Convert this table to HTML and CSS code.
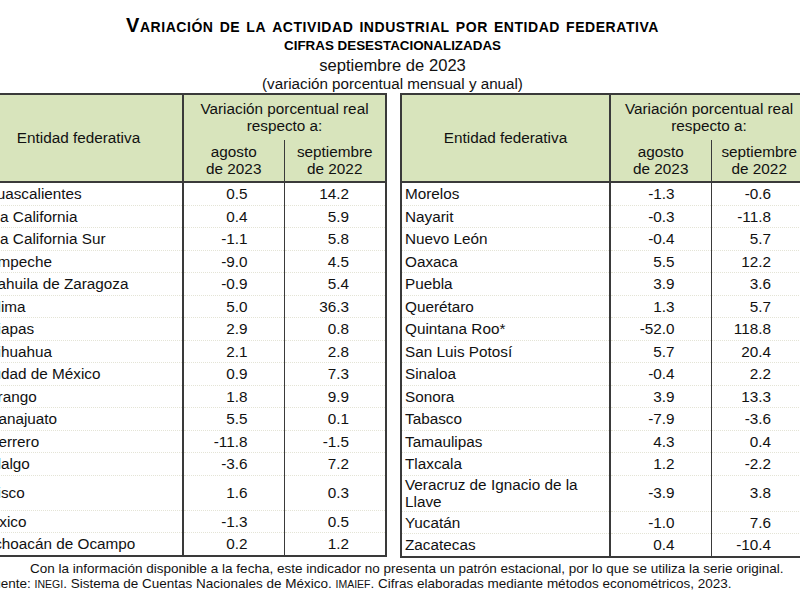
FILE: index.html
```html
<!DOCTYPE html>
<html lang="es">
<head>
<meta charset="utf-8">
<title>Variación de la actividad industrial por entidad federativa</title>
<link rel="stylesheet" href="styles.css">
</head>
<body>
<div class="page">
  <header class="heading">
    <h1 class="title">Variación de la actividad industrial por entidad federativa</h1>
    <div class="sub">CIFRAS DESESTACIONALIZADAS</div>
    <div class="date">septiembre de 2023</div>
    <div class="paren">(variación porcentual mensual y anual)</div>
  </header>
  <div class="tables">
    <table class="data">
      <colgroup><col class="c-name"><col class="c-val"><col class="c-val2"></colgroup>
      <thead>
        <tr class="h1"><th rowspan="2" class="th-name">Entidad federativa</th><th colspan="2" class="th-group">Variación porcentual real<br>respecto a:</th></tr>
        <tr class="h2"><th class="th-a">agosto<br>de 2023</th><th class="th-b">septiembre<br>de 2022</th></tr>
      </thead>
      <tbody>
        <tr><td>Aguascalientes</td><td>0.5</td><td>14.2</td></tr>
        <tr><td>Baja California</td><td>0.4</td><td>5.9</td></tr>
        <tr><td>Baja California Sur</td><td>-1.1</td><td>5.8</td></tr>
        <tr><td>Campeche</td><td>-9.0</td><td>4.5</td></tr>
        <tr><td>Coahuila de Zaragoza</td><td>-0.9</td><td>5.4</td></tr>
        <tr><td>Colima</td><td>5.0</td><td>36.3</td></tr>
        <tr><td>Chiapas</td><td>2.9</td><td>0.8</td></tr>
        <tr><td>Chihuahua</td><td>2.1</td><td>2.8</td></tr>
        <tr><td>Ciudad de México</td><td>0.9</td><td>7.3</td></tr>
        <tr><td>Durango</td><td>1.8</td><td>9.9</td></tr>
        <tr><td>Guanajuato</td><td>5.5</td><td>0.1</td></tr>
        <tr><td>Guerrero</td><td>-11.8</td><td>-1.5</td></tr>
        <tr><td>Hidalgo</td><td>-3.6</td><td>7.2</td></tr>
        <tr class="tall"><td>Jalisco</td><td>1.6</td><td>0.3</td></tr>
        <tr><td>México</td><td>-1.3</td><td>0.5</td></tr>
        <tr><td>Michoacán de Ocampo</td><td>0.2</td><td>1.2</td></tr>
      </tbody>
    </table>
    <table class="data data-right">
      <colgroup><col class="c-name"><col class="c-val"><col class="c-val2"></colgroup>
      <thead>
        <tr class="h1"><th rowspan="2" class="th-name">Entidad federativa</th><th colspan="2" class="th-group">Variación porcentual real<br>respecto a:</th></tr>
        <tr class="h2"><th class="th-a">agosto<br>de 2023</th><th class="th-b">septiembre<br>de 2022</th></tr>
      </thead>
      <tbody>
        <tr><td>Morelos</td><td>-1.3</td><td>-0.6</td></tr>
        <tr><td>Nayarit</td><td>-0.3</td><td>-11.8</td></tr>
        <tr><td>Nuevo León</td><td>-0.4</td><td>5.7</td></tr>
        <tr><td>Oaxaca</td><td>5.5</td><td>12.2</td></tr>
        <tr><td>Puebla</td><td>3.9</td><td>3.6</td></tr>
        <tr><td>Querétaro</td><td>1.3</td><td>5.7</td></tr>
        <tr><td>Quintana Roo*</td><td>-52.0</td><td>118.8</td></tr>
        <tr><td>San Luis Potosí</td><td>5.7</td><td>20.4</td></tr>
        <tr><td>Sinaloa</td><td>-0.4</td><td>2.2</td></tr>
        <tr><td>Sonora</td><td>3.9</td><td>13.3</td></tr>
        <tr><td>Tabasco</td><td>-7.9</td><td>-3.6</td></tr>
        <tr><td>Tamaulipas</td><td>4.3</td><td>0.4</td></tr>
        <tr><td>Tlaxcala</td><td>1.2</td><td>-2.2</td></tr>
        <tr class="tall"><td>Veracruz de Ignacio de la Llave</td><td>-3.9</td><td>3.8</td></tr>
        <tr><td>Yucatán</td><td>-1.0</td><td>7.6</td></tr>
        <tr><td>Zacatecas</td><td>0.4</td><td>-10.4</td></tr>
      </tbody>
    </table>
  </div>
  <footer class="notes">
    <p class="note1">Con la información disponible a la fecha, este indicador no presenta un patrón estacional, por lo que se utiliza la serie original.</p>
    <p class="note2">Fuente: <span class="sc">INEGI</span>. Sistema de Cuentas Nacionales de México. <span class="sc">IMAIEF</span>. Cifras elaboradas mediante métodos econométricos, 2023.</p>
  </footer>
</div>
</body>
</html>
```

FILE: styles.css
```css
html, body {
  margin: 0;
  padding: 0;
  background: #ffffff;
  overflow: hidden;
}
body {
  font-family: "Liberation Sans", Arial, sans-serif;
  color: #111111;
  width: 800px;
  height: 600px;
}
.page {
  width: 839px;
  margin-left: -27px;
}
.heading {
  text-align: center;
  padding-top: 15px;
}
.title {
  margin: 0;
  font-size: 20px;
  line-height: 20px;
  letter-spacing: 0.55px;
  font-weight: bold;
  font-variant: small-caps;
  color: #000;
}
.sub {
  margin-top: 3px;
  font-size: 13.4px;
  line-height: 16px;
  font-weight: bold;
  color: #000;
}
.date {
  margin-top: 1.5px;
  font-size: 16.6px;
  line-height: 19px;
}
.paren {
  font-size: 15.2px;
  line-height: 17px;
}
.tables {
  margin-top: 1.5px;
  display: flex;
  gap: 13px;
  align-items: flex-start;
}
.data {
  border-collapse: collapse;
  table-layout: fixed;
  width: 412px;
  font-size: 15.3px;
  border: 2px solid #3a3a3a;
}
.data-right { width: 407px; }
.c-name { width: 209px; }
.c-val { width: 101px; }
.c-val2 { width: 102px; }
.data-right .c-val2 { width: 97px; }
.data th {
  background: #d8e4bc;
  font-weight: normal;
  line-height: 16.5px;
  padding: 0;
  text-align: center;
}
.data .h1 { height: 46px; }
.data .h2 { height: 42px; }
.th-name { border-right: 2px solid #3a3a3a; border-bottom: 2px solid #3a3a3a; }
.th-group { vertical-align: middle; padding-top: 2px; }
.th-a { border-right: 1px solid #3a3a3a; border-bottom: 2px solid #3a3a3a; }
.th-b { border-bottom: 2px solid #3a3a3a; }
.data td {
  padding: 0 0 0 3px;
  line-height: 17.5px;
  height: 21.5px;
  border-bottom: 1px dotted #e4e4d6;
  white-space: nowrap;
}
.data tr.tall td { height: 34px; white-space: normal; }
.data td:first-child { border-right: 2px solid #3a3a3a; }
.data td:nth-child(2) { border-right: 1px solid #3a3a3a; }
.data td:nth-child(2),
.data td:nth-child(3) {
  text-align: right;
  padding: 0 36px 0 0;
}
.data tbody tr:last-child td { border-bottom: 2px solid #3a3a3a; }
.notes {
  font-size: 13.5px;
  line-height: 15px;
  margin-top: 3px;
}
.notes p { margin: 0; }
.note1 { padding-left: 57px; }
.note2 { padding-left: 12px; }
.sc { font-size: 10.5px; }
```
